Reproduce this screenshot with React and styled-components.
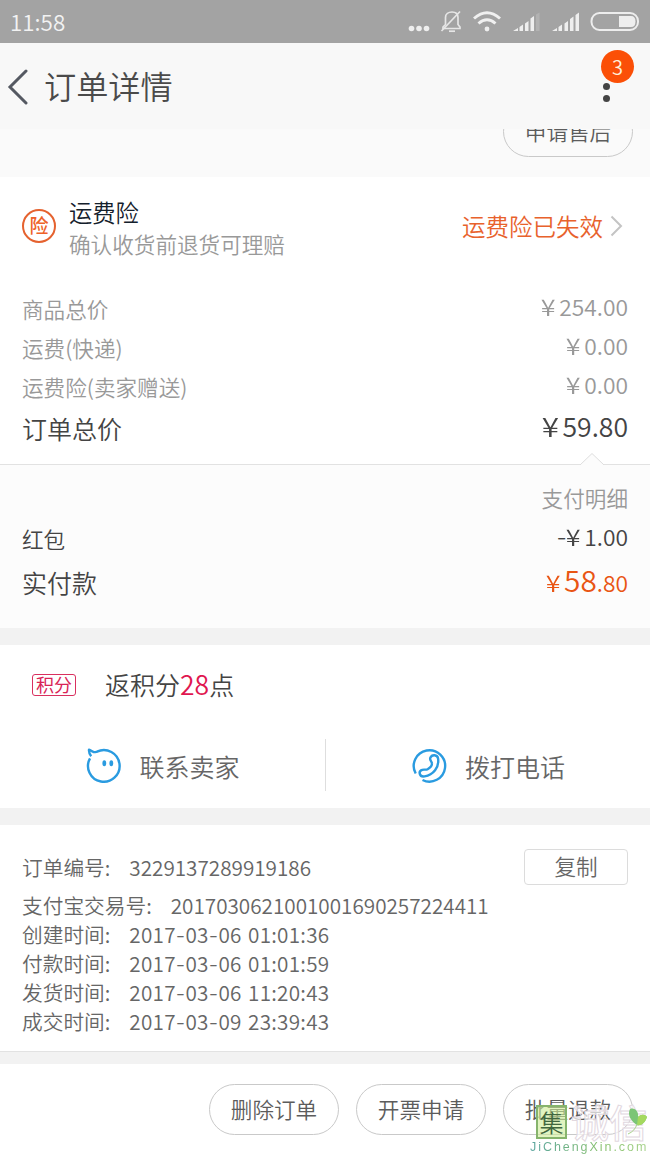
import React from "react";
import { styled, createGlobalStyle } from "styled-components";

const GlobalStyle = createGlobalStyle`
  * {
    box-sizing: border-box;
  }

  body {
    margin: 0;
    background: #fff;
    font-family: "Noto Sans CJK SC", sans-serif;
    font-weight: 350;
    color: #4a4a4a;
  }
`;

const Page = styled.div`
  position: relative;
  width: 650px;
  height: 1155px;
  display: flex;
  flex-direction: column;
  overflow: hidden;
  background: #fff;
`;

const StatusBar = styled.div`
  height: 43px;
  flex-shrink: 0;
  padding-left: 10px;
  display: flex;
  justify-content: space-between;
  background: #a3a3a3;
  color: #f2f2f2;
  font-size: 22.4px;
  line-height: 42px;
`;

const Header = styled.div`
  height: 86px;
  flex-shrink: 0;
  padding: 0 36px 0 7px;
  display: flex;
  align-items: center;
  background: #f8f8f8;
`;

const Title = styled.div`
  flex: 1;
  margin-left: 15px;
  padding-bottom: 2px;
  font-size: 32.2px;
  line-height: 40px;
`;

const More = styled.div`
  position: relative;
  width: 15px;
  height: 86px;
`;

const Badge = styled.div`
  position: absolute;
  left: 2px;
  top: 7px;
  width: 33px;
  height: 33px;
  border-radius: 50%;
  background: #fb4f07;
  color: #fff0dc;
  font-size: 20px;
  line-height: 33px;
  text-align: center;
`;

const ServiceRow = styled.div`
  height: 48px;
  flex-shrink: 0;
  padding: 0 17px 20px 0;
  display: flex;
  justify-content: flex-end;
  align-items: flex-end;
  overflow: hidden;
  background: #fafafa;
`;

const Pill = styled.div`
  width: 130px;
  height: 51px;
  flex-shrink: 0;
  border: 1px solid #c9c9c9;
  border-radius: 26px;
  color: #5c5c5c;
  font-size: 21.6px;
  line-height: 48px;
  text-align: center;
`;

const Insurance = styled.div`
  height: 110px;
  flex-shrink: 0;
  padding: 0 27px 12px 22px;
  display: flex;
  align-items: center;
`;

const InsuranceMark = styled.div`
  width: 34px;
  height: 34px;
  border: 2px solid #e5622f;
  border-radius: 50%;
  color: #ee6229;
  font-size: 19px;
  font-weight: 500;
  line-height: 28px;
  text-align: center;
`;

const InsuranceText = styled.div`
  flex: 1;
  margin-left: 13px;
  padding-top: 3px;
  font-size: 21.6px;
  line-height: 31px;
  color: #999;
`;

const InsuranceName = styled.div`
  font-size: 23.3px;
  color: #14202c;
`;

const InsuranceState = styled.div`
  margin-right: 7px;
  padding-bottom: 1px;
  font-size: 23.5px;
  color: #e8622c;
`;

const Prices = styled.div`
  height: 177px;
  flex-shrink: 0;
  padding: 2px 22px 0;
`;

const Row = styled.div`
  height: ${(p) => p.$height || 39}px;
  display: flex;
  justify-content: space-between;
  align-items: center;
  font-size: ${(p) => p.$size || 21.6}px;
  line-height: 36px;
  color: ${(p) => p.$color || "#999"};
`;

const Amount = styled.span`
  padding-bottom: 3px;
  font-size: ${(p) => p.$size || 22.8}px;
  color: ${(p) => p.$color || "inherit"};
`;

const Yen = styled.span`
  display: inline-block;
  margin-right: 5px;
  transform: scaleX(1.18);
`;

const Dash = styled.span`
  font-family: Inter, sans-serif;
  font-weight: 300;
`;

const Big = styled.span`
  font-size: 29.8px;
`;

const Payment = styled.div`
  position: relative;
  height: 164px;
  flex-shrink: 0;
  padding: 13px 22px 0;
  border-top: 1px solid #e2e2e2;
  background: #fcfcfc;
`;

const Notch = styled.svg`
  position: absolute;
  left: 580px;
  top: -13px;
`;

const Detail = styled.div`
  height: 40px;
  text-align: right;
  font-size: 21.6px;
  line-height: 39px;
  color: #999;
`;

const Gap = styled.div`
  height: ${(p) => p.$height}px;
  flex-shrink: 0;
  border-top: ${(p) => (p.$line ? "1px solid #e2e2e2" : "none")};
  background: #f2f2f2;
`;

const Points = styled.div`
  height: 79px;
  flex-shrink: 0;
  padding-left: 32px;
  display: flex;
  align-items: center;
  font-size: 25px;
  line-height: 36px;
  color: #444;
`;

const PointsTag = styled.div`
  width: 44px;
  height: 22px;
  margin-right: 29px;
  border: 1px solid #d9305f;
  border-radius: 3px;
  color: #d92356;
  font-size: 18px;
  font-weight: 400;
  line-height: 19px;
  text-align: center;
`;

const PointsText = styled.div`
  padding-bottom: 1px;
`;

const Red = styled.span`
  font-size: 26.5px;
  color: #e0164f;
`;

const Contacts = styled.div`
  height: 84px;
  flex-shrink: 0;
  display: flex;
`;

const Contact = styled.div`
  flex: 1;
  padding-left: 85px;
  display: flex;
  align-items: center;
  gap: 16.500px;
  color: #666;
  font-size: 25px;
  line-height: 36px;

  & > span {
    padding-bottom: 1px;
  }
`;

const Separator = styled.div`
  width: 1px;
  height: 52px;
  margin-top: 15px;
  background: #dedede;
`;

const OrderInfo = styled.div`
  height: 226px;
  flex-shrink: 0;
  padding: 24px 22px 0;
  color: #666;
  font-size: 20.7px;
`;

const InfoHead = styled.div`
  height: 42px;
  display: flex;
  justify-content: space-between;

  & > div:first-child {
    padding-top: 4px;
  }
`;

const InfoLine = styled.div`
  display: flex;
  height: 29px;
  line-height: 29px;
`;

const InfoLabel = styled.span`
  margin-right: 19px;
`;

const InfoValue = styled.span`
  letter-spacing: ${(p) => p.$spacing || 0}px;
  word-spacing: 1.5px;
`;

const CopyButton = styled.div`
  width: 104px;
  height: 36px;
  border: 1.5px solid #dcdcdc;
  border-radius: 4px;
  font-size: 21.6px;
  line-height: 32px;
  text-align: center;
`;

const Footer = styled.div`
  height: 91px;
  flex-shrink: 0;
  padding: 20px 17px 0;
  display: flex;
  justify-content: flex-end;
  gap: 17px;
`;

const Watermark = styled.div`
  position: absolute;
  left: 530px;
  top: 1105px;
  width: 120px;
`;

const WatermarkTop = styled.div`
  display: flex;
  height: 36px;
  padding-left: 6px;
`;

const WatermarkSeal = styled.div`
  width: 31px;
  height: 34px;
  border: 2px solid #86b46c;
  background: rgba(205, 236, 150, 0.6);
  color: #41673f;
  font-size: 24px;
  font-weight: 350;
  line-height: 29px;
  text-align: center;
`;

const WatermarkName = styled.div`
  margin-left: 4px;
  font-size: 38px;
  font-weight: 500;
  line-height: 32px;
  color: rgba(255, 255, 255, 0.7);
  -webkit-text-stroke: 1px #e2d8df;
`;

const Leaf = styled.svg`
  position: absolute;
  left: 97px;
  top: 2px;
`;

const WatermarkUrl = styled.div`
  margin-top: -1px;
  font-family: "Liberation Sans", sans-serif;
  font-size: 12.5px;
  font-weight: 400;
  line-height: 15px;
  letter-spacing: 1.95px;
  white-space: nowrap;
  color: transparent;
  background: linear-gradient(90deg, #5ba5a0, #86c06c 60%, #a8d38c);
  background-clip: text;
`;

function StatusIcons() {
  return (
    <svg width="250" height="43" viewBox="0 0 250 43" fill="#eee">
      <circle cx="11.5" cy="28.5" r="2.8" />
      <circle cx="19" cy="28.5" r="2.8" />
      <circle cx="26.5" cy="28.5" r="2.8" />
      <g fill="none" stroke="#e6e6e6" strokeWidth="1.7">
        <path d="M43 28.5h17v-1.5l-2-2.5v-7c0-3.5-2.5-5.5-6-5.500s-6.500 2-6.500 5.500v7l-2.500 2.500z" />
        <path d="M60 11.500L41.500 31" />
        <path d="M49 31.200h6" />
      </g>
      <g fill="none" stroke="#f0f0f0" strokeWidth="3">
        <path d="M74 18.500q13-11.500 26 0" />
        <path d="M78.500 23.500q8.500-7.500 17 0" />
      </g>
      <circle cx="87" cy="29" r="2.400" />
      <path d="M113 31l5-3v3zM119.500 27l3.500-2.500V31h-3.500zM125 23.500l3.500-2.500v10H125zM130.500 18.500l3.500-2.500V31h-3.500z" />
      <path d="M136 14.500l3.500-2V31H136z" opacity=".2" />
      <path d="M152 31l5-3v3zM158.500 27l3.500-2.500V31h-3.500zM164.500 23.500l3.500-2.500v10h-3.500zM170 19l3.500-2.500V31H170zM175.500 15l3.500-2.500V31h-3.500z" />
      <rect x="191.500" y="13" width="46.500" height="17" rx="8" fill="none" stroke="#ededed" strokeWidth="2" />
      <path d="M219 16h12q4.500 0 4.500 5.500t-4.500 5.500h-12z" />
    </svg>
  );
}

function SellerIcon() {
  return (
    <svg width="38" height="38" viewBox="0 0 38 38" fill="none" stroke="#2a9be0" strokeWidth="2.400" strokeLinejoin="round">
      <path d="M5 11.300A15.800 15.800 0 1 0 12 4.700C10.500 5 9.500 5.300 8.500 5 7 4.400 5.500 3 4 2.700c-.2 2.300.6 4.600 2.200 6.500" />
      <g fill="#2a9be0" stroke="none">
        <ellipse cx="19.300" cy="16.300" rx="1.900" ry="3" />
        <ellipse cx="26.300" cy="16.300" rx="1.900" ry="3" />
      </g>
    </svg>
  );
}

function PhoneIcon() {
  return (
    <svg width="38" height="38" viewBox="0 0 38 38" fill="none" stroke="#2a9be0" strokeWidth="2.400">
      <path d="M4.700 26.500A15.700 15.700 0 1 1 11.500 33" />
      <path d="M19.300 10.800c1.600-3.800 7.200-3.400 7.800.8 1.200 8.800-4.800 16.400-13.500 17.800-5.400.9-6.600-5.400-2.300-6.600 2.200-.6 3.500.4 5.300-.6 2.600-1.500 4.600-3.600 4.300-6-.2-2-2.500-3-1.600-5.400z" />
    </svg>
  );
}

function DateValue({ value }) {
  const [year, month, rest] = value.split("-");
  return (
    <InfoValue $spacing={0.27}>
      {year}
      <Dash>-</Dash>
      {month}
      <Dash>-</Dash>
      {rest}
    </InfoValue>
  );
}

const times = [
  ["创建时间:", "2017-03-06 01:01:36"],
  ["付款时间:", "2017-03-06 01:01:59"],
  ["发货时间:", "2017-03-06 11:20:43"],
  ["成交时间:", "2017-03-09 23:39:43"],
];

function App() {
  return (
    <Page>
      <GlobalStyle />
      <StatusBar>
        <span>11:58</span>
        <StatusIcons />
      </StatusBar>
      <Header>
        <svg width="22" height="38" viewBox="0 0 22 38" fill="none" stroke="#555962" strokeWidth="3" strokeLinecap="round">
          <path d="M19 4L3 20l16 16" />
        </svg>
        <Title>订单详情</Title>
        <More>
          <svg width="15" height="86" fill="#444">
            <circle cx="7.500" cy="43.500" r="3.500" />
            <circle cx="7.500" cy="55.500" r="3.500" />
          </svg>
          <Badge>3</Badge>
        </More>
      </Header>
      <ServiceRow>
        <Pill>申请售后</Pill>
      </ServiceRow>
      <Insurance>
        <InsuranceMark>险</InsuranceMark>
        <InsuranceText>
          <InsuranceName>运费险</InsuranceName>
          <div>确认收货前退货可理赔</div>
        </InsuranceText>
        <InsuranceState>运费险已失效</InsuranceState>
        <svg width="13" height="22" viewBox="0 0 13 22" fill="none" stroke="#c4c4c4" strokeWidth="2">
          <path d="M1.500 1.500L11 11 1.500 20.500" />
        </svg>
      </Insurance>
      <Prices>
        <Row>
          <span>商品总价</span>
          <Amount><Yen>¥</Yen>254.00</Amount>
        </Row>
        <Row>
          <span>运费(快递)</span>
          <Amount><Yen>¥</Yen>0.00</Amount>
        </Row>
        <Row>
          <span>运费险(卖家赠送)</span>
          <Amount><Yen>¥</Yen>0.00</Amount>
        </Row>
        <Row $height={43} $size={25} $color="#444">
          <span>订单总价</span>
          <Amount $size={26.6}><Yen>¥</Yen>59.80</Amount>
        </Row>
      </Prices>
      <Payment>
        <Notch width="24" height="14" viewBox="0 0 24 14" fill="#fcfcfc" stroke="#dedede">
          <path d="M0 13L12 1.500 24 13" />
        </Notch>
        <Detail>支付明细</Detail>
        <Row $height={42} $color="#444">
          <span>红包</span>
          <Amount><Dash>-</Dash><Yen>¥</Yen>1.00</Amount>
        </Row>
        <Row $height={44} $size={25} $color="#444">
          <span>实付款</span>
          <Amount $size={22.8} $color="#e95513"><Yen>¥</Yen><Big>58</Big>.80</Amount>
        </Row>
      </Payment>
      <Gap $height={17} />
      <Points>
        <PointsTag>积分</PointsTag>
        <PointsText>返积分<Red>28</Red>点</PointsText>
      </Points>
      <Contacts>
        <Contact>
          <SellerIcon />
          <span>联系卖家</span>
        </Contact>
        <Separator />
        <Contact>
          <PhoneIcon />
          <span>拨打电话</span>
        </Contact>
      </Contacts>
      <Gap $height={17} />
      <OrderInfo>
        <InfoHead>
          <InfoLine>
            <InfoLabel>订单编号:</InfoLabel>
            <InfoValue>3229137289919186</InfoValue>
          </InfoLine>
          <CopyButton>复制</CopyButton>
        </InfoHead>
        <InfoLine>
          <InfoLabel>支付宝交易号:</InfoLabel>
          <InfoValue>2017030621001001690257224411</InfoValue>
        </InfoLine>
        {times.map(([label, value]) => (
          <InfoLine key={label}>
            <InfoLabel>{label}</InfoLabel>
            <DateValue value={value} />
          </InfoLine>
        ))}
      </OrderInfo>
      <Gap $height={13} $line />
      <Footer>
        <Pill>删除订单</Pill>
        <Pill>开票申请</Pill>
        <Pill>批量退款</Pill>
      </Footer>
      <Watermark>
        <WatermarkTop>
          <WatermarkSeal>集</WatermarkSeal>
          <WatermarkName>诚信</WatermarkName>
        </WatermarkTop>
        <Leaf width="20" height="28" viewBox="0 0 20 28">
          <path d="M3 2c5-2 9 3 8 8 3-3 7-3 9 0-2 6-6 9-10 8C4 14 0 8 3 2z" fill="#7cc576" />
          <path d="M11 10c3-3 7-3 9 0-2 6-6 9-10 8z" fill="#a5d95f" />
          <path d="M10 17q-2 7-9 10" fill="none" stroke="#a9d48c" />
        </Leaf>
        <WatermarkUrl>JiChengXin.com</WatermarkUrl>
      </Watermark>
    </Page>
  );
}

export default App;
